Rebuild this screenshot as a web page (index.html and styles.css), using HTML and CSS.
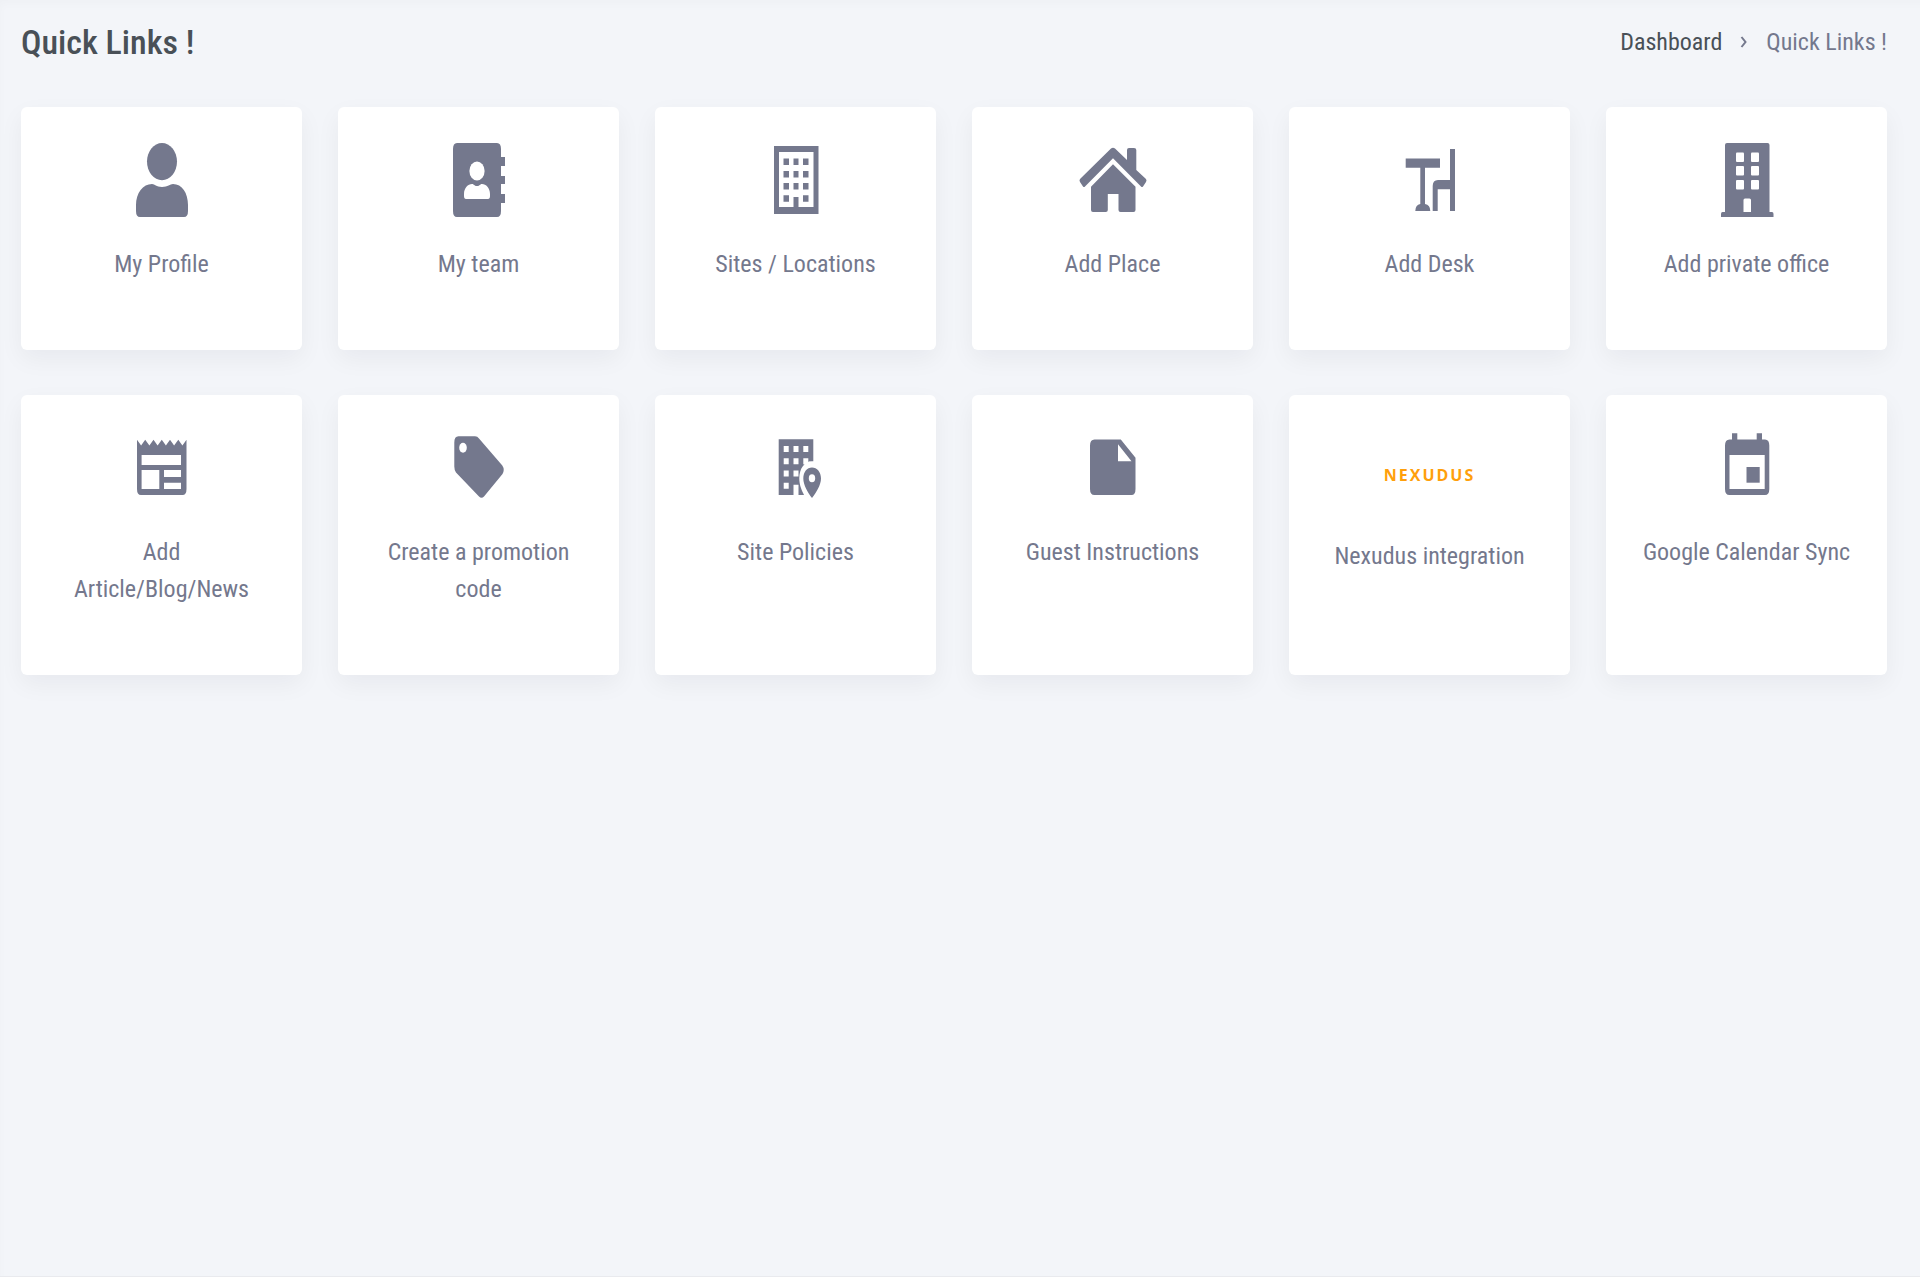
FILE: index.html
```html
<!DOCTYPE html>
<html lang="en">
<head>
<meta charset="utf-8">
<meta name="viewport" content="width=device-width, initial-scale=1">
<title>Quick Links !</title>
<link rel="stylesheet" href="styles.css">
</head>
<body>
<main class="page">
  <header class="page-head">
    <h1 class="page-title">Quick Links !</h1>
    <nav aria-label="Breadcrumb">
      <ol class="breadcrumb">
        <li><a href="#">Dashboard</a></li>
        <li class="sep" aria-hidden="true"><svg width="8" height="12" viewBox="0 0 8 12"><path d="M1.500 1L5.500 6L1.500 11" fill="none" stroke="currentColor" stroke-width="2"/></svg></li>
        <li aria-current="page">Quick Links !</li>
      </ol>
    </nav>
  </header>

  <section class="cards" aria-label="Quick links">
    <a class="card" href="#">
      <svg class="icon" viewBox="0 0 80 74" aria-hidden="true">
        <ellipse cx="40" cy="18.600" rx="15" ry="18.600"/>
        <path d="M14 68V62C14 50 21 41 30 41C33 41 34 44 40 44S48 41 51 41C60 41 66 50 66 62V68Q66 74 62 74H18Q14 74 14 68Z"/>
      </svg>
      <span class="label">My Profile</span>
    </a>
    <a class="card" href="#">
      <svg class="icon" viewBox="1 0 80 74" aria-hidden="true">
        <path d="M19 0H59Q63 0 63 6V14H67V23H63V33H67V41H63V51H67V60H63V68Q63 74 59 74H19Q15 74 15 68V6Q15 0 19 0Z"/>
        <g fill="#fff"><ellipse cx="39" cy="28" rx="7.600" ry="9.400"/><path d="M26 53V51C26 45 30 41 34 41C36 41 36 43 39 43S42 41 44 41C48 41 52 45 52 51V53Q52 56 50 56H28Q26 56 26 53Z"/></g>
      </svg>
      <span class="label">My team</span>
    </a>
    <a class="card" href="#">
      <svg class="icon" viewBox="1 0 80 74" aria-hidden="true">
        <path fill-rule="evenodd" d="M19 3H63.500V71H19ZM24 9V64H38.500V54H43.500V64H58.500V9Z"/>
        <path d="M28.500 15.500h5.500v6.500h-5.500zM38.500 15.500h5v6.500h-5zM48 15.500h5.500v6.500h-5.500zM28.500 28h5.500v6.500h-5.500zM38.500 28h5v6.500h-5zM48 28h5.500v6.500h-5.500zM28.500 40h5.500v6.500h-5.500zM38.500 40h5v6.500h-5zM48 40h5.500v6.500h-5.500zM28.500 52.300h5.500v6.500h-5.500zM48 52.300h5.500v6.500h-5.500z"/>
      </svg>
      <span class="label">Sites / Locations</span>
    </a>
    <a class="card" href="#">
      <svg class="icon" viewBox="1 0 80 74" aria-hidden="true">
        <path d="M39 5.500Q41 4 43 5.500L55 17V7Q55 5 57 5H62Q64.300 5 64.300 7V27L74 36Q75 37.500 74 39L71 43.500Q70 44.500 69 43.500L41 15.300L13 43.500Q12 44.500 11 43.500L8 39Q7 37.500 8 36Z"/>
        <path d="M41 21.300L63.500 43.700V67Q63.500 69 61.500 69H48.500Q46.500 69 46.500 67V51H35.800V67Q35.800 69 33.800 69H21Q19 69 19 67V43.700Z"/>
      </svg>
      <span class="label">Add Place</span>
    </a>
    <a class="card" href="#">
      <svg class="icon" viewBox="1 0 80 74" aria-hidden="true">
        <path d="M16.700 15.500H51V24.700H36V61Q41.300 62 41.300 68H26.300Q26.300 62 31.300 61V24.700H16.700Z"/>
        <path d="M61 6H66V68H61V46.300H48.700V68H43.700V43Q43.700 37 49 37H61Z"/>
      </svg>
      <span class="label">Add Desk</span>
    </a>
    <a class="card" href="#">
      <svg class="icon" viewBox="1 0 80 74" aria-hidden="true">
        <path d="M21 0H61.500Q63.500 0 63.500 2V69H66Q67.500 69 67.500 71V74H15V71Q15 69 16.500 69H19V2Q19 0 21 0Z"/>
        <g fill="#fff"><rect x="30" y="9.500" width="8" height="9.500" rx="1"/><rect x="45" y="9.500" width="8" height="9.500" rx="1"/><rect x="30" y="23" width="8" height="9.500" rx="1"/><rect x="45" y="23" width="8" height="9.500" rx="1"/><rect x="30" y="37" width="8" height="9.500" rx="1"/><rect x="45" y="37" width="8" height="9.500" rx="1"/><path d="M37.500 69V57Q37.500 55.500 39 55.500H43.500Q45 55.500 45 57V69Z"/></g>
      </svg>
      <span class="label">Add private office</span>
    </a>

    <a class="card" href="#">
      <svg class="icon" viewBox="0 0 80 74" aria-hidden="true">
        <path d="M15 8.700L19.100 14.500L23.200 8.700L27.400 14.500L31.500 8.700L35.600 14.500L39.800 8.700L43.900 14.500L48 8.700L52.100 14.500L56.300 8.700L60.400 14.500L64.500 8.700V58Q64.500 64 60.500 64H19Q15 64 15 58Z"/>
        <path fill="#fff" d="M19.600 24H59V34H19.600ZM19.600 39H37.300V58H19.600ZM42 39H59V46H42ZM42 51.700H59V58H42Z"/>
      </svg>
      <span class="label">Add Article/Blog/News</span>
    </a>
    <a class="card" href="#">
      <svg class="icon" viewBox="1 0 80 74" aria-hidden="true">
        <path d="M20.500 5.300H37Q39.500 5.300 41 7.500L64.300 34.500Q67 38.500 64.500 43L46 65.500Q43.500 68 41 65.500L18 41.500Q16.300 39 16.300 35.500V11.500Q16.300 5.300 20.500 5.300Z"/>
        <ellipse cx="25" cy="16.700" rx="3.800" ry="5" fill="#fff"/>
      </svg>
      <span class="label">Create a promotion code</span>
    </a>
    <a class="card" href="#">
      <svg class="icon" viewBox="1 0 80 74" aria-hidden="true">
        <path d="M23.700 8.300H58.300V30.500H53.500V64H23.700Z"/>
        <path fill="#fff" d="M28.700 15h5v6h-5zM38.500 15h5v6h-5zM48.300 15h5v6h-5zM28.700 27.300h5v6h-5zM38.500 27.300h5v6h-5zM48.300 27.300h5v6h-5zM28.700 39.500h5v6h-5zM38.500 39.500h5v6h-5zM28.700 51.700h5v6h-5zM38.500 53.700h5v10.300h-5z"/>
        <path d="M57 30.500C49 30.500 44.300 38 44.300 47C44.300 54 46.500 59 49 64H66V30.500Z" fill="#fff"/>
        <path fill-rule="evenodd" d="M57 36.500C62 36.500 66 41 66 47.500C66 54 61 62 57 67C53 62 48.300 54 48.300 47.500C48.300 41 52 36.500 57 36.500ZM57 43.300A3.200 4 0 0 0 57 51.300A3.200 4 0 0 0 57 43.300Z"/>
      </svg>
      <span class="label">Site Policies</span>
    </a>
    <a class="card" href="#">
      <svg class="icon" viewBox="1 0 80 74" aria-hidden="true">
        <path fill-rule="evenodd" d="M22.500 8.500H48.800L63.500 26.700V58Q63.500 64 59.500 64H22.500Q18 64 18 58V14.500Q18 8.500 22.500 8.500ZM46 13.300V30.300H59.500Z"/>
      </svg>
      <span class="label">Guest Instructions</span>
    </a>
    <a class="card" href="#">
      <span class="brand">NEXUDUS</span>
      <span class="label">Nexudus integration</span>
    </a>
    <a class="card" href="#">
      <svg class="icon" viewBox="1 0 80 74" aria-hidden="true">
        <path fill-rule="evenodd" d="M26 2.300H31.300V8.500H50.700V2.300H56V8.500H59Q63.300 8.500 63.300 14.500V58Q63.300 64 59 64H23.500Q19 64 19 58V14.500Q19 8.500 23.500 8.500H26ZM23.500 24V58H58.700V24Z"/>
        <path d="M40.500 36H53.700V51.700H40.500Z"/>
      </svg>
      <span class="label">Google Calendar Sync</span>
    </a>
  </section>
</main>
</body>
</html>
```
FILE: styles.css
```css
* {
  box-sizing: border-box;
}

body {
  margin: 0;
  background: #fff;
  color: #74788d;
  font-family: "Roboto Condensed", Roboto, "Liberation Sans", sans-serif;
  font-size: 24px;
  line-height: 37px;
}

a {
  color: inherit;
  text-decoration: none;
}

.page {
  min-height: calc(100vh - 3px);
  padding: 20px 33px 40px 21px;
  border-bottom: 1px solid #e9eaee;
  background: #f3f5f9;
  box-shadow: inset 4px 8px 8px -4px rgba(18, 38, 63, 0.02);
}

.page-head {
  display: flex;
  align-items: center;
  justify-content: space-between;
  height: 44px;
  margin-bottom: 43px;
}

.page-title {
  margin: 0;
  color: #495057;
  font-size: 34px;
  font-weight: 500;
}

.breadcrumb {
  display: flex;
  gap: 18px;
  margin: 0;
  padding: 0;
  list-style: none;
}

.breadcrumb a {
  color: #495057;
}

.sep {
  display: flex;
  align-items: center;
}

.cards {
  display: grid;
  grid-template-columns: repeat(6, 1fr);
  gap: 45px 36px;
}

.card {
  display: flex;
  flex-direction: column;
  align-items: center;
  padding: 36px 32px 67px;
  border-radius: 6px;
  background: #fff;
  box-shadow: 0 9px 24px rgba(24, 28, 36, 0.05);
  text-align: center;
}

.icon {
  width: 80px;
  height: 74px;
  margin-bottom: 29px;
  fill: #74788d;
}

.brand {
  height: 78px;
  margin-bottom: 29px;
  padding-top: 26px;
  color: #ff9f0c;
  font-family: "Open Sans", sans-serif;
  font-size: 16px;
  font-weight: 700;
  letter-spacing: 2px;
}
```
